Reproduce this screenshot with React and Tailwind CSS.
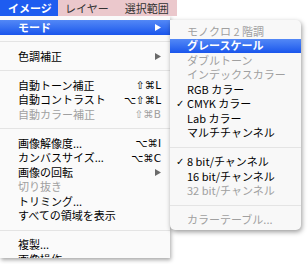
import React from "react";

const JP = { fontFamily: '"Noto Sans CJK JP", "DejaVu Sans", sans-serif' };
const SYM = { fontFamily: '"DejaVu Sans", "Noto Sans CJK JP", sans-serif' };

function Arrow({ color }) {
  return (
    <svg width="6" height="7" viewBox="0 0 6 7">
      <path d="M0 0 L6 3.5 L0 7 Z" fill={color} />
    </svg>
  );
}

function Item({ label, shortcut, disabled, arrow, active }) {
  const text = active ? "text-white font-bold" : disabled ? "text-[#a0a0a0]" : "text-black";
  return (
    <div
      className={`h-[14.5px] flex items-center pl-[18px] pr-[9px] text-[11px] leading-none ${text} ${
        active ? "bg-gradient-to-b from-[#5388f6] to-[#1a55ec]" : ""
      }`}
    >
      <span className="flex-1 whitespace-nowrap">{label}</span>
      {shortcut && (
        <span className="text-[10.5px] whitespace-nowrap" style={SYM}>
          {shortcut}
        </span>
      )}
      {arrow && <Arrow color={active ? "#fff" : "#6a6a6a"} />}
    </div>
  );
}

function Sep() {
  return (
    <div className="h-[14.5px] flex items-center">
      <div className="h-px w-full bg-[#e4e4e4]" />
    </div>
  );
}

function SubItem({ label, disabled, checked, active }) {
  const text = active ? "text-white font-bold" : disabled ? "text-[#a0a0a0]" : "text-black";
  return (
    <div
      className={`relative h-[14.5px] flex items-center pl-[17px] text-[11px] leading-none whitespace-nowrap ${text} ${
        active ? "bg-gradient-to-b from-[#5388f6] to-[#1a55ec]" : ""
      }`}
    >
      {checked && <span className="absolute left-[6px] text-[10px]" style={SYM}>✓</span>}
      {label}
    </div>
  );
}

export default function App() {
  return (
    <div className="relative w-[308px] h-[264px] bg-white overflow-hidden" style={JP}>
      {/* menu bar */}
      <div className="flex h-[16px] text-[11px] leading-none">
        <div className="w-[58px] bg-[#1e5cf0] text-white font-bold flex items-center pl-[8px]">
          イメージ
        </div>
        <div className="w-[119px] bg-[#ebc8cc] text-[#333] flex items-center gap-[16px] pl-[7px]">
          <span>レイヤー</span>
          <span>選択範囲</span>
        </div>
      </div>

      {/* main menu */}
      <div className="w-[170px] h-[242px] pt-[4px] bg-[#fafafa] overflow-hidden shadow-[1px_2px_4px_rgba(0,0,0,0.35)]">
        <Item label="モード" arrow active />
        <Sep />
        <Item label="色調補正" arrow />
        <Sep />
        <Item label="自動トーン補正" shortcut="⇧⌘L" />
        <Item label="自動コントラスト" shortcut="⌥⇧⌘L" />
        <Item label="自動カラー補正" shortcut="⇧⌘B" disabled />
        <Sep />
        <Item label="画像解像度..." shortcut="⌥⌘I" />
        <Item label="カンバスサイズ..." shortcut="⌥⌘C" />
        <Item label="画像の回転" arrow />
        <Item label="切り抜き" disabled />
        <Item label="トリミング..." />
        <Item label="すべての領域を表示" />
        <Sep />
        <Item label="複製..." />
        <Item label="画像操作" />
      </div>

      {/* submenu */}
      <div className="absolute left-[170px] top-[20px] w-[131px] h-[210px] pt-[4px] bg-[#f8f8f8] rounded-tr-[5px] rounded-b-[5px] shadow-[1px_2px_5px_rgba(0,0,0,0.4)] overflow-hidden">
        <SubItem label="モノクロ 2 階調" disabled />
        <SubItem label="グレースケール" active />
        <SubItem label="ダブルトーン" disabled />
        <SubItem label="インデックスカラー" disabled />
        <SubItem label="RGB カラー" />
        <SubItem label="CMYK カラー" checked />
        <SubItem label="Lab カラー" />
        <SubItem label="マルチチャンネル" />
        <Sep />
        <SubItem label="8 bit/チャンネル" checked />
        <SubItem label="16 bit/チャンネル" />
        <SubItem label="32 bit/チャンネル" disabled />
        <Sep />
        <SubItem label="カラーテーブル..." disabled />
      </div>
    </div>
  );
}
